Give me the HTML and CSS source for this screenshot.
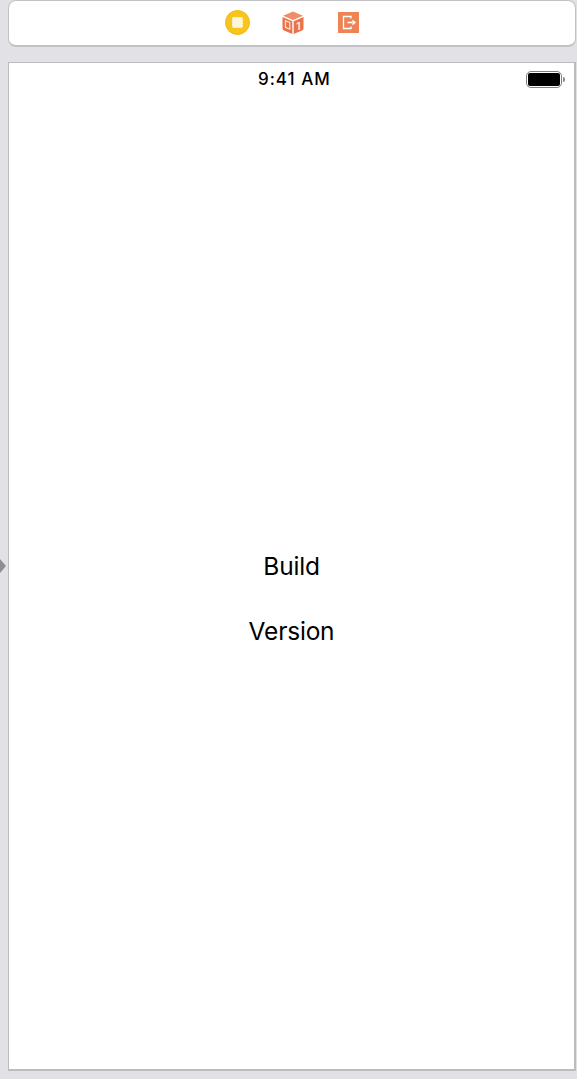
FILE: index.html
```html
<!DOCTYPE html>
<html lang="en">
<head>
<meta charset="utf-8">
<title>Storyboard scene</title>
<link rel="stylesheet" href="styles.css">
</head>
<body>
<div class="toolbar">
  <svg class="icon" width="25" height="25" viewBox="0 0 25 25">
    <circle cx="12.500" cy="12.500" r="12" fill="#f8c51c" stroke="#f0b818" stroke-width="1"/>
    <rect x="7.500" y="7.500" width="10" height="10" rx="1" fill="#fdf6dc" stroke="#fff" stroke-width="1" stroke-dasharray="1 1"/>
  </svg>
  <svg class="icon icon-cube" width="22" height="23" viewBox="0 0 22 23">
    <path d="M11 0.500 L21 4.800 L11 9 L1 4.800 Z" fill="#ee8f69"/>
    <path d="M0.500 6 L10.300 10.200 V23 L2 19.500 Q0.500 18.900 0.500 17.500 Z" fill="#e9744c"/>
    <path d="M21.500 6 L11.700 10.200 V23 L20 19.500 Q21.500 18.900 21.500 17.500 Z" fill="#e9744c"/>
    <path d="M3.500 9.700 L7.800 11.500 V18.200 L3.500 16.400 Z" fill="none" stroke="#fbe3d8" stroke-width="1.200"/>
    <text class="cube-digit" x="16.500" y="19">1</text>
  </svg>
  <svg class="icon" width="21" height="21" viewBox="0 0 21 21">
    <rect width="21" height="21" fill="#ed8455"/>
    <path d="M13 6.500 V4.500 H5.500 V16.500 H13 V14.500" fill="none" stroke="#fff" stroke-width="1.300"/>
    <path d="M9.500 10.500 H14.500" stroke="#fff" stroke-width="1.500"/>
    <path d="M14.500 7.500 L18 10.500 L14.500 13.500 Z" fill="#fff"/>
  </svg>
</div>
<div class="arrow"></div>
<main class="screen">
  <div class="status">
    <span class="time">9:41 AM</span>
    <div class="battery"><div class="charge"></div></div>
    <div class="nub"></div>
  </div>
  <div class="labels">
    <p class="label">Build</p>
    <p class="label">Version</p>
  </div>
</main>
</body>
</html>
```
FILE: styles.css
```css
* { box-sizing: border-box; }
html, body { height: 100%; }
body {
  margin: 0;
  padding: 0 1px 8px 8px;
  background: #e2e2e6;
  display: flex;
  flex-direction: column;
  gap: 15px;
  overflow: hidden;
  font-family: Inter, "Liberation Sans", sans-serif;
  color: #000;
}
.toolbar {
  flex: none;
  height: 47px;
  background: #fff;
  border: 1px solid #c2c2c6;
  border-bottom-width: 2px;
  border-radius: 8px;
  display: flex;
  justify-content: center;
  align-items: center;
  gap: 33px;
  padding-bottom: 1px;
}
.icon { display: block; flex: none; }
.icon-cube { margin: 0 1px 0 -1px; }
.cube-digit {
  fill: #fbe3d8;
  font-size: 10px;
  font-weight: 700;
  text-anchor: middle;
}
.arrow {
  position: absolute;
  left: 0;
  top: 559px;
  width: 0;
  height: 0;
  border-left: 6px solid #8d8d92;
  border-top: 7px solid transparent;
  border-bottom: 7px solid transparent;
}
.screen {
  flex: 1;
  background: #fff;
  border: 1px solid #bcbcc0;
  border-bottom-width: 2px;
  border-right-width: 2px;
  display: flex;
  flex-direction: column;
}
.status {
  flex: none;
  height: 32px;
  display: flex;
  align-items: center;
  justify-content: flex-end;
  padding: 0 9px 0 0;
  position: relative;
}
.time {
  position: absolute;
  left: 249px;
  top: 5px;
  font-size: 17px;
  line-height: 22px;
  font-weight: 500;
  letter-spacing: 1px;
}
.battery {
  width: 36px;
  height: 17px;
  border: 1px solid #808084;
  border-radius: 5px;
  padding: 1px;
}
.charge {
  height: 100%;
  background: #000;
  border-radius: 2px;
}
.nub {
  width: 2px;
  height: 5px;
  margin-left: 1px;
  background: #8a8a8e;
  border-radius: 0 2px 2px 0;
}
.labels {
  display: flex;
  flex-direction: column;
  align-items: center;
  gap: 35px;
  padding: 456px 0 0;
}
.label {
  margin: 0;
  font-size: 24.500px;
  line-height: 30px;
  font-weight: 400;
  letter-spacing: -0.2px;
}
```
